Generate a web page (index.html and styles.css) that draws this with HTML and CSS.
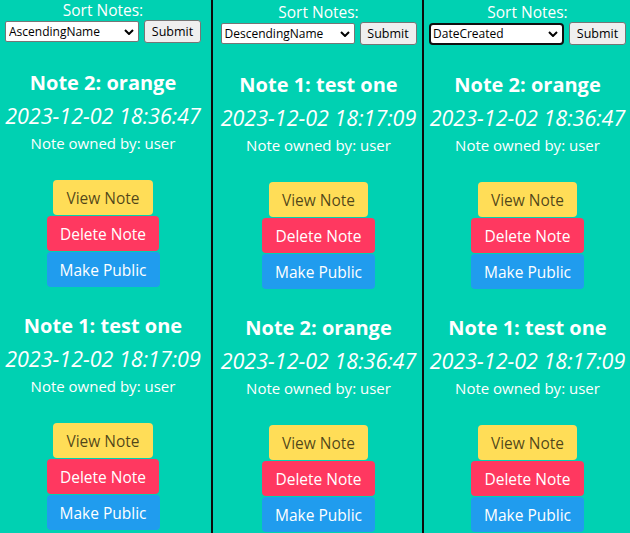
FILE: index.html
```html
<!DOCTYPE html>
<html lang="en">
<head>
<meta charset="utf-8">
<title>Notes</title>
<link rel="stylesheet" href="styles.css">
</head>
<body>
<div class="cols">
  <section class="col col-a">
    <div class="sort">
      <div class="sort-label">Sort Notes:</div>
      <form class="sort-form">
        <select class="sel"><option>AscendingName</option></select>
        <button type="button" class="submit">Submit</button>
      </form>
    </div>
    <div class="note">
      <h2 class="title">Note 2: orange</h2>
      <p class="date">2023-12-02 18:36:47</p>
      <p class="owner">Note owned by: user</p>
      <div class="actions">
        <button class="btn btn-view">View Note</button>
        <button class="btn btn-delete">Delete Note</button>
        <button class="btn btn-public">Make Public</button>
      </div>
    </div>
    <div class="note">
      <h2 class="title">Note 1: test one</h2>
      <p class="date">2023-12-02 18:17:09</p>
      <p class="owner">Note owned by: user</p>
      <div class="actions">
        <button class="btn btn-view">View Note</button>
        <button class="btn btn-delete">Delete Note</button>
        <button class="btn btn-public">Make Public</button>
      </div>
    </div>
  </section>
  <div class="divider"></div>
  <section class="col col-b">
    <div class="sort">
      <div class="sort-label">Sort Notes:</div>
      <form class="sort-form">
        <select class="sel"><option>DescendingName</option></select>
        <button type="button" class="submit">Submit</button>
      </form>
    </div>
    <div class="note">
      <h2 class="title">Note 1: test one</h2>
      <p class="date">2023-12-02 18:17:09</p>
      <p class="owner">Note owned by: user</p>
      <div class="actions">
        <button class="btn btn-view">View Note</button>
        <button class="btn btn-delete">Delete Note</button>
        <button class="btn btn-public">Make Public</button>
      </div>
    </div>
    <div class="note">
      <h2 class="title">Note 2: orange</h2>
      <p class="date">2023-12-02 18:36:47</p>
      <p class="owner">Note owned by: user</p>
      <div class="actions">
        <button class="btn btn-view">View Note</button>
        <button class="btn btn-delete">Delete Note</button>
        <button class="btn btn-public">Make Public</button>
      </div>
    </div>
  </section>
  <div class="divider"></div>
  <section class="col col-c">
    <div class="sort">
      <div class="sort-label">Sort Notes:</div>
      <form class="sort-form">
        <select class="sel sel-focus"><option>DateCreated</option></select>
        <button type="button" class="submit">Submit</button>
      </form>
    </div>
    <div class="note">
      <h2 class="title">Note 2: orange</h2>
      <p class="date">2023-12-02 18:36:47</p>
      <p class="owner">Note owned by: user</p>
      <div class="actions">
        <button class="btn btn-view">View Note</button>
        <button class="btn btn-delete">Delete Note</button>
        <button class="btn btn-public">Make Public</button>
      </div>
    </div>
    <div class="note">
      <h2 class="title">Note 1: test one</h2>
      <p class="date">2023-12-02 18:17:09</p>
      <p class="owner">Note owned by: user</p>
      <div class="actions">
        <button class="btn btn-view">View Note</button>
        <button class="btn btn-delete">Delete Note</button>
        <button class="btn btn-public">Make Public</button>
      </div>
    </div>
  </section>
</div>
</body>
</html>
```
FILE: styles.css
```css
html, body {
  margin: 0;
  padding: 0;
  height: 100%;
  overflow: hidden;
  background: #00d1b2;
}
body {
  font-family: "Open Sans", "Noto Sans", sans-serif;
  color: #ffffff;
}
.cols {
  display: flex;
  height: 533px;
  width: 630px;
}
.col {
  display: flex;
  flex-direction: column;
  align-items: center;
  box-sizing: border-box;
}
.col-a { width: 211px; padding-right: 5px; }
.col-b { width: 209px; padding-left: 2px; padding-top: 2px; }
.col-c { width: 206px; padding-left: 1px; padding-top: 2px; }
.divider {
  width: 2px;
  background: #0b0b0b;
  flex: none;
}
.sort {
  display: flex;
  flex-direction: column;
  align-items: center;
}
.sort-label {
  font-size: 15.5px;
  line-height: 20px;
  height: 20px;
}
.sort-form {
  display: flex;
  align-items: center;
  gap: 5px;
  margin: 0;
  height: 23px;
}
.sel {
  -webkit-appearance: none;
  appearance: none;
  width: 134px;
  height: 21px;
  box-sizing: border-box;
  border: 1px solid #767676;
  border-radius: 2px;
  background-color: #ffffff;
  background-image: url("data:image/svg+xml;utf8,<svg xmlns='http://www.w3.org/2000/svg' width='10' height='6' viewBox='0 0 10 6'><path d='M1 1 L5 5 L9 1' fill='none' stroke='black' stroke-width='2'/></svg>");
  background-repeat: no-repeat;
  background-position: right 4px center;
  font-family: "Open Sans", sans-serif;
  font-size: 12px;
  color: #000000;
  padding: 0 16px 0 3px;
  margin: 0;
}
.sel-focus {
  border: 2px solid #101010;
  border-radius: 4px;
  padding-left: 2px;
  width: 135px;
  height: 22px;
}
.submit {
  height: 23px;
  width: 57px;
  box-sizing: border-box;
  border: 1px solid #767676;
  border-radius: 3px;
  background: #efefef;
  color: #000000;
  font-family: "Open Sans", sans-serif;
  font-size: 12.5px;
  padding: 0;
  margin: 0;
}
.note {
  display: flex;
  flex-direction: column;
  align-items: center;
  margin-top: 28px;
}
.note + .note { margin-top: 27px; }
.title {
  margin: 0;
  font-size: 20px;
  line-height: 24px;
  font-weight: 700;
}
.date {
  margin: 6px 0 0;
  font-size: 21.5px;
  line-height: 30px;
  font-style: italic;
}
.owner {
  margin: 1px 0 0;
  font-size: 15px;
  line-height: 22px;
}
.actions {
  display: flex;
  flex-direction: column;
  align-items: center;
  gap: 1px;
  margin-top: 26px;
}
.btn {
  height: 35px;
  box-sizing: border-box;
  border: none;
  border-radius: 4px;
  padding: 0 13px;
  font-family: "Open Sans", sans-serif;
  font-size: 15.5px;
  margin: 0;
}
.btn-view { background: #ffdd57; color: rgba(0, 0, 0, 0.7); }
.btn-delete { background: #ff3860; color: #ffffff; }
.btn-public { background: #209cee; color: #ffffff; }
```
